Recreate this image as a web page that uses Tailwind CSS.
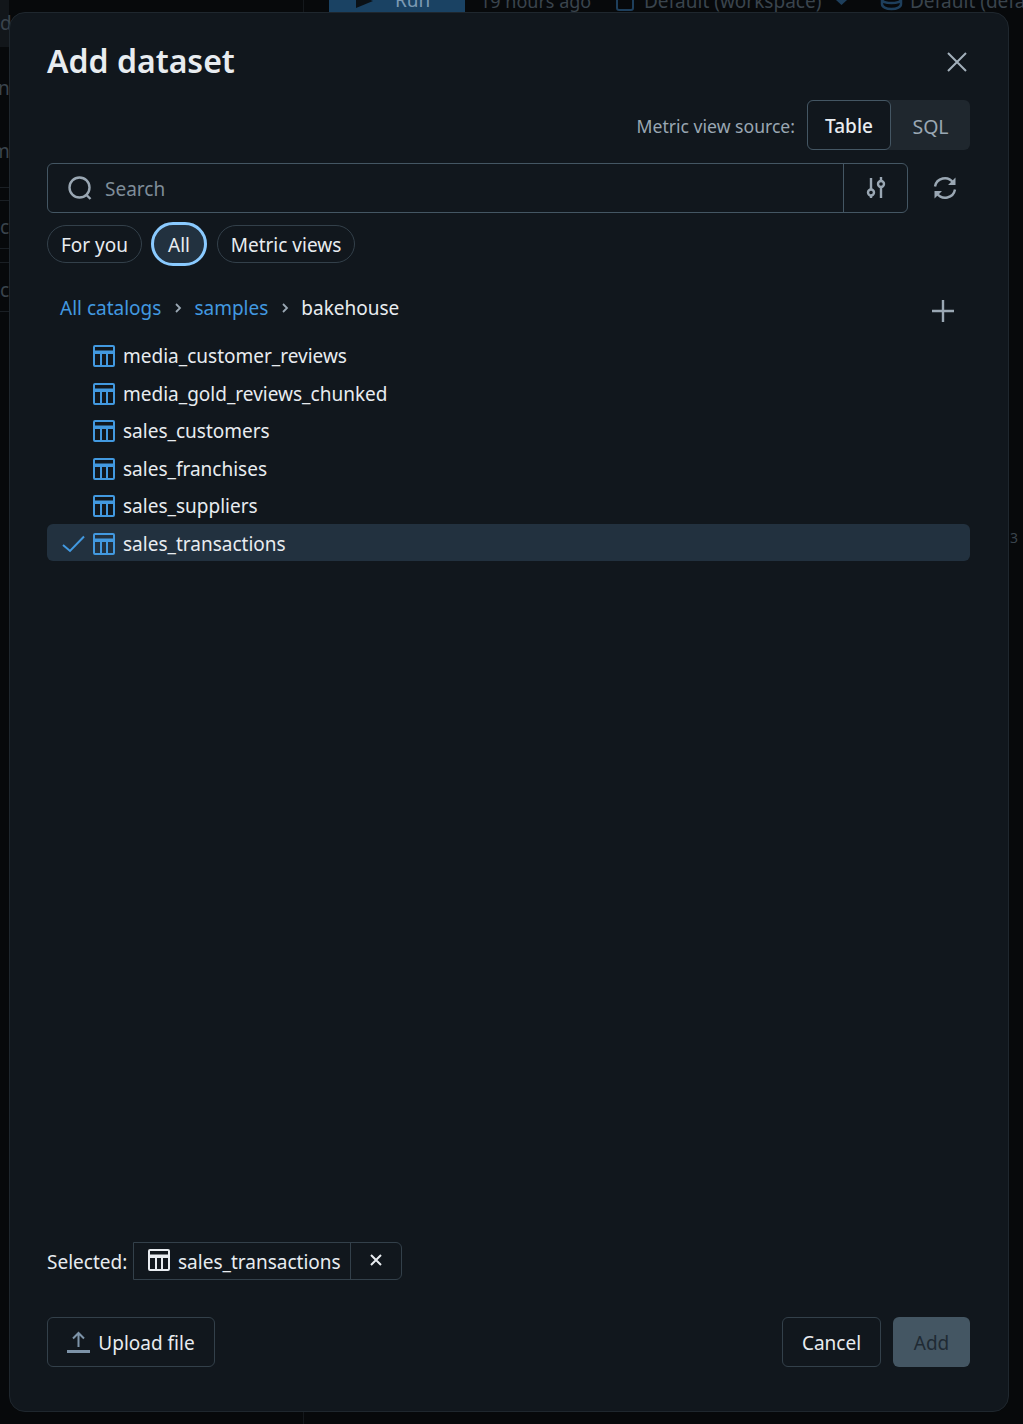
<!DOCTYPE html>
<html lang="en">
<head>
    <meta charset="UTF-8">
    <meta name="viewport" content="width=device-width, initial-scale=1.0">
    <title>Add dataset</title>
    <script src="https://cdn.jsdelivr.net/npm/@tailwindcss/browser@4"></script>
</head>
<body class="bg-[#07090b] h-[1424px] overflow-hidden relative font-['Noto_Sans',sans-serif] text-[#e8ecf0]">

    <!-- page behind the dialog -->
    <div class="absolute left-0 top-0 w-[9px] h-[47px] bg-[#12161a]"></div>
    <div class="absolute left-0 top-[187px] w-[9px] h-px bg-[#1a1f24]"></div>
    <div class="absolute left-0 top-[200px] w-[9px] h-px bg-[#1a1f24]"></div>
    <div class="absolute left-0 top-[248px] w-[9px] h-px bg-[#1a1f24]"></div>
    <div class="absolute left-0 top-[262px] w-[9px] h-px bg-[#1a1f24]"></div>
    <div class="absolute left-0 top-[311px] w-[9px] h-px bg-[#1a1f24]"></div>
    <div class="absolute left-[303px] top-0 h-full w-px bg-[#14181c]"></div>
    <div class="absolute left-[329px] top-0 w-[136px] h-[12px] bg-[#1a4263] overflow-hidden text-[#7c9ab3] text-[19px] leading-none">
        <svg class="absolute left-[27px] -top-[6px] w-[17px] h-[14px]" viewBox="0 0 17 14" fill="#0b1116"><path d="M0 0l17 7-17 7z"/></svg>
        <span class="absolute left-[66px] -top-[9px]">Run</span>
    </div>
    <div class="absolute left-[480px] -top-[8px] text-[18px] leading-none text-[#3a444d] whitespace-nowrap">19 hours ago</div>
    <svg class="absolute left-[615px] -top-[6px] w-[20px] h-[18px]" viewBox="0 0 20 18" fill="none" stroke="#1e3f5c" stroke-width="2"><rect x="2" y="-6" width="16" height="22" rx="2"/></svg>
    <div class="absolute left-[644px] -top-[8px] text-[19px] leading-none text-[#3a444d] whitespace-nowrap">Default (workspace)</div>
    <svg class="absolute left-[836px] top-0 w-[11px] h-[5px]" viewBox="0 0 11 5" fill="#1e3f5c"><path d="M0 0h11L5.500 5z"/></svg>
    <svg class="absolute left-[880px] -top-[6px] w-[23px] h-[18px]" viewBox="0 0 23 18" fill="none" stroke="#1e3f5c" stroke-width="2.500"><path d="M2 0v10c0 3 4 5 9.500 5s9.500-2 9.500-5V0M2 5c0 3 4 4 9.500 4s9.500-1 9.500-4"/></svg>
    <div class="absolute left-[910px] -top-[8px] text-[19px] leading-none text-[#3a444d] whitespace-nowrap">Default (default)</div>
    <div class="absolute left-0 top-[14px] text-[19px] text-[#3a444d] leading-none">dr</div>
    <div class="absolute -left-[2px] top-[79px] text-[19px] text-[#3a444d] leading-none">nt</div>
    <div class="absolute -left-[8px] top-[142px] text-[19px] text-[#3a444d] leading-none">m</div>
    <div class="absolute left-0 top-[218px] text-[19px] text-[#3a444d] leading-none">c</div>
    <div class="absolute left-0 top-[281px] text-[19px] text-[#3a444d] leading-none">c</div>
    <div class="absolute left-[1010px] top-[531px] text-[14px] text-[#3a444d] leading-none">3</div>

    <!-- dialog -->
    <div class="absolute left-[9px] top-[12px] w-[1000px] h-[1400px] bg-[#11171d] border border-[#1f272e] rounded-[16px] pl-[37px] pr-[38px] pt-[20px] pb-[44px] flex flex-col">

        <div class="flex items-center justify-between h-[56px]">
            <h1 class="text-[32px] font-semibold leading-none">Add dataset</h1>
            <svg class="w-[24px] h-[24px] mr-[1px] mt-[2px]" viewBox="0 0 24 24" fill="none" stroke="#a3b0bb" stroke-width="2"><path d="M3 3l18 18M21 3L3 21"/></svg>
        </div>

        <div class="flex items-center justify-end mt-[11px] h-[50px]">
            <span class="text-[17.6px] text-[#9aa7b3] mr-[12px] pt-[2px]">Metric view source:</span>
            <div class="flex h-[50px] bg-[#1f272e] rounded-[6px]">
                <div class="w-[84px] pt-[3px] flex items-center justify-center border border-[#445663] bg-[#11171d] rounded-[6px] text-[19px] font-medium">Table</div>
                <div class="w-[79px] pt-[3px] flex items-center justify-center text-[19.500px] text-[#9aa7b3]">SQL</div>
            </div>
        </div>

        <div class="flex items-center mt-[13px]">
            <div class="w-[861px] h-[50px] flex border border-[#445663] rounded-[6px]">
                <div class="flex-1 flex items-center pl-[20px] gap-[12px] border-r border-[#445663]">
                    <svg class="w-[25px] h-[25px]" viewBox="0 0 25 25" fill="none" stroke="#9aa7b3" stroke-width="2.400"><circle cx="11.500" cy="11.500" r="10"/><path d="M18.500 19l4 4"/></svg>
                    <span class="text-[19px] text-[#7f8d99] pt-[2px]">Search</span>
                </div>
                <div class="w-[63px] flex items-center justify-center">
                    <svg class="w-[20px] h-[24px]" viewBox="0 0 20 24" fill="none" stroke="#9aa7b3" stroke-width="2.400"><path d="M5 2v11M5 20v2M15 1v4M15 11v11"/><circle cx="5" cy="16.500" r="3"/><circle cx="15" cy="8" r="3"/></svg>
                </div>
            </div>
            <svg class="w-[24px] h-[24px] ml-[25px]" viewBox="0 0 24 24" fill="none" stroke="#9aa7b3" stroke-width="2.400"><path d="M2 10.500A10 10 0 0 1 20 6.500M22 13.500A10 10 0 0 1 4 17.500"/><path d="M22.500 1.500v7.500h-7.500zM1.500 22.500v-7.500h7.500z" fill="#9aa7b3" stroke="none"/></svg>
        </div>

        <div class="flex items-center mt-[12px] h-[38px] text-[19px]">
            <div class="h-[38px] w-[95px] pt-[3px] flex items-center justify-center border border-[#33404a] rounded-full">For you</div>
            <div class="h-[44px] w-[56px] ml-[9px] pt-[3px] flex items-center justify-center border-[3px] border-[#8acaff] bg-[#22313f] rounded-full">All</div>
            <div class="h-[38px] w-[138px] ml-[10px] pt-[3px] flex items-center justify-center border border-[#33404a] rounded-full">Metric views</div>
        </div>

        <div class="flex items-center justify-between mt-[26px] h-[36px] pl-[13px] pr-[15px] text-[19px]">
            <div class="flex items-center pt-[2px]">
                <span class="text-[#4299e0]">All catalogs</span>
                <svg class="w-[8px] h-[12px] mx-[12.500px]" viewBox="0 0 8 12" fill="none" stroke="#9aa7b3" stroke-width="1.800"><path d="M2 2l4 4-4 4"/></svg>
                <span class="text-[#4299e0]">samples</span>
                <svg class="w-[8px] h-[12px] mx-[12.500px]" viewBox="0 0 8 12" fill="none" stroke="#9aa7b3" stroke-width="1.800"><path d="M2 2l4 4-4 4"/></svg>
                <span>bakehouse</span>
            </div>
            <svg class="w-[24px] h-[24px] mt-[8px]" viewBox="0 0 24 24" fill="none" stroke="#9aa7b3" stroke-width="2.400"><path d="M12 1v22M1 12h22"/></svg>
        </div>

        <div class="flex-1 mt-[11px] text-[19px]">
            <div class="h-[37.500px] pt-[3px] flex items-center pl-[46px] gap-[8px]">
                <svg class="w-[22px] h-[22px]" viewBox="0 0 22 22" fill="none" stroke="#4299e0" stroke-width="2"><rect x="1" y="1" width="20" height="20" rx="1"/><path d="M1 6.500h20M1 8h20M8 7v14M14 7v14"/></svg>
                <span>media_customer_reviews</span>
            </div>
            <div class="h-[37.500px] pt-[3px] flex items-center pl-[46px] gap-[8px]">
                <svg class="w-[22px] h-[22px]" viewBox="0 0 22 22" fill="none" stroke="#4299e0" stroke-width="2"><rect x="1" y="1" width="20" height="20" rx="1"/><path d="M1 6.500h20M1 8h20M8 7v14M14 7v14"/></svg>
                <span>media_gold_reviews_chunked</span>
            </div>
            <div class="h-[37.500px] pt-[3px] flex items-center pl-[46px] gap-[8px]">
                <svg class="w-[22px] h-[22px]" viewBox="0 0 22 22" fill="none" stroke="#4299e0" stroke-width="2"><rect x="1" y="1" width="20" height="20" rx="1"/><path d="M1 6.500h20M1 8h20M8 7v14M14 7v14"/></svg>
                <span>sales_customers</span>
            </div>
            <div class="h-[37.500px] pt-[3px] flex items-center pl-[46px] gap-[8px]">
                <svg class="w-[22px] h-[22px]" viewBox="0 0 22 22" fill="none" stroke="#4299e0" stroke-width="2"><rect x="1" y="1" width="20" height="20" rx="1"/><path d="M1 6.500h20M1 8h20M8 7v14M14 7v14"/></svg>
                <span>sales_franchises</span>
            </div>
            <div class="h-[37.500px] pt-[3px] flex items-center pl-[46px] gap-[8px]">
                <svg class="w-[22px] h-[22px]" viewBox="0 0 22 22" fill="none" stroke="#4299e0" stroke-width="2"><rect x="1" y="1" width="20" height="20" rx="1"/><path d="M1 6.500h20M1 8h20M8 7v14M14 7v14"/></svg>
                <span>sales_suppliers</span>
            </div>
            <div class="h-[37.500px] pt-[3px] flex items-center pl-[15px] gap-[8px] bg-[#22313f] rounded-[6px]">
                <svg class="w-[23px] h-[18px]" viewBox="0 0 23 18" fill="none" stroke="#4299e0" stroke-width="2"><path d="M1 10l7 6L22 1.500"/></svg>
                <svg class="w-[22px] h-[22px]" viewBox="0 0 22 22" fill="none" stroke="#4299e0" stroke-width="2"><rect x="1" y="1" width="20" height="20" rx="1"/><path d="M1 6.500h20M1 8h20M8 7v14M14 7v14"/></svg>
                <span>sales_transactions</span>
            </div>
        </div>

        <div class="flex items-center h-[38px] text-[19px]">
            <span class="w-[86px] pt-[3px]">Selected:</span>
            <div class="flex h-[38px] w-[269px] border border-[#33404a] rounded-r-[6px]">
                <div class="w-[217px] flex items-center pl-[14px] gap-[8px] border-r border-[#33404a]">
                    <svg class="w-[22px] h-[22px] -mt-[2px]" viewBox="0 0 22 22" fill="none" stroke="#e8ecf0" stroke-width="2"><rect x="1" y="1" width="20" height="20" rx="1"/><path d="M1 6.500h20M1 8h20M8 7v14M14 7v14"/></svg>
                    <span class="pt-[3px]">sales_transactions</span>
                </div>
                <div class="flex-1 flex items-center justify-center">
                    <svg class="w-[14px] h-[14px] -mt-[2px]" viewBox="0 0 14 14" fill="none" stroke="#e8ecf0" stroke-width="2"><path d="M2 2l10 10M12 2L2 12"/></svg>
                </div>
            </div>
        </div>

        <div class="flex items-center justify-between mt-[37px] text-[19px]">
            <div class="h-[50px] w-[168px] flex items-center justify-center gap-[8px] border border-[#33404a] rounded-[6px]">
                <svg class="w-[23px] h-[22px]" viewBox="0 0 23 22" fill="none" stroke="#7d93a8" stroke-width="2"><path d="M11.500 16V2M6 7.500l5.500-5.500 5.500 5.500"/><path d="M0 20.500h23" stroke-width="3"/></svg>
                <span class="pt-[3px]">Upload file</span>
            </div>
            <div class="flex items-center gap-[12px]">
                <div class="h-[50px] w-[99px] pt-[3px] flex items-center justify-center border border-[#33404a] rounded-[6px]">Cancel</div>
                <div class="h-[50px] w-[77px] pt-[3px] flex items-center justify-center bg-[#445663] text-[#1f2a33] rounded-[6px]">Add</div>
            </div>
        </div>
    </div>
</body>
</html>
